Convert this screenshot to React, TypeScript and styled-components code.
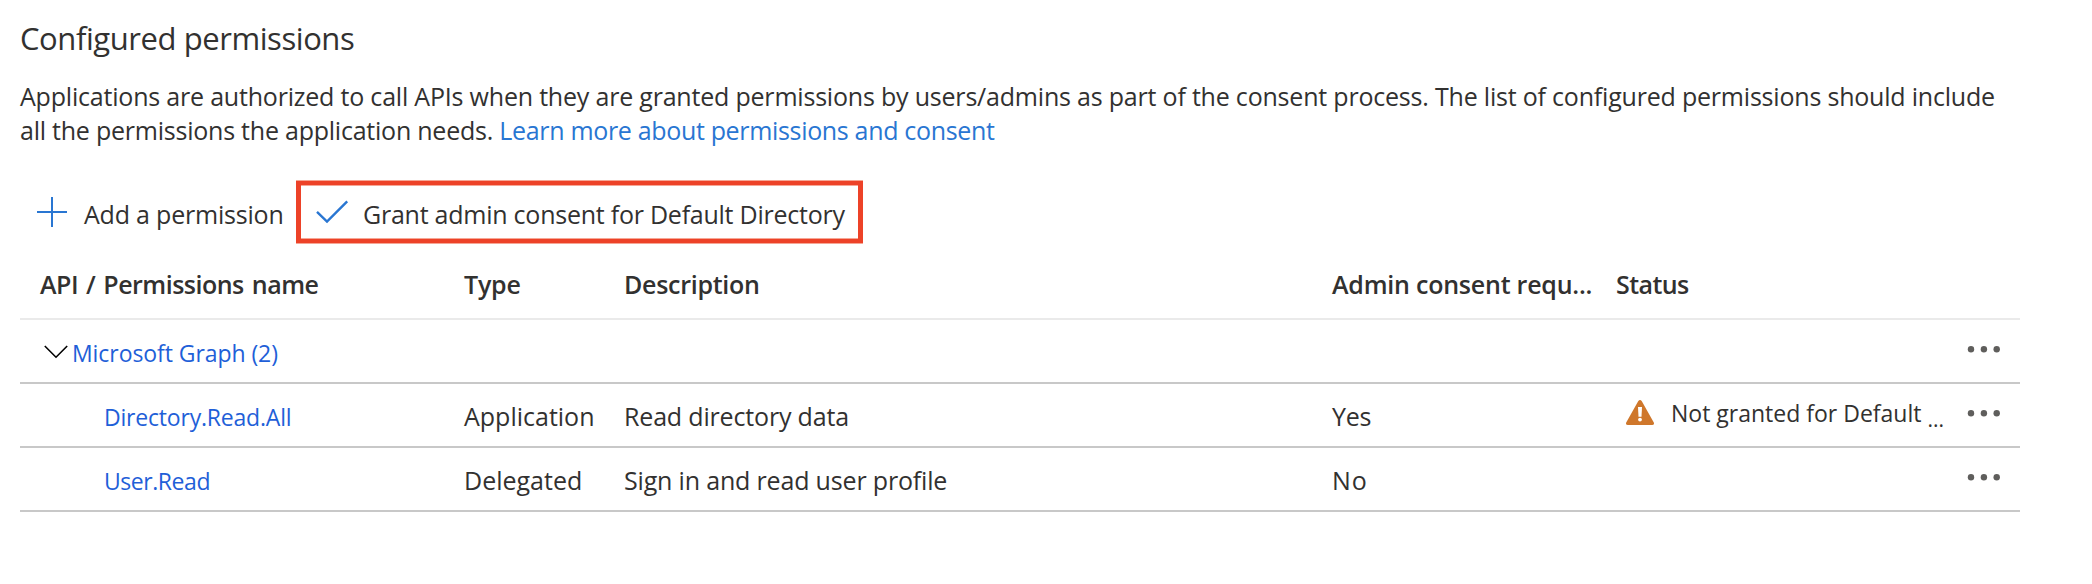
import React from "react";
import styled, { createGlobalStyle } from "styled-components";

const GlobalStyle = createGlobalStyle`
  * { box-sizing: border-box; }
  body {
    margin: 0;
    background: #fff;
    color: #323130;
    font-family: "Open Sans", "Noto Sans", sans-serif;
    font-size: 25px;
    line-height: 34px;
  }
  svg { display: block; flex: none; }
`;

const Page = styled.main`
  width: 2092px;
  height: 584px;
  padding: 18px 72px 0 20px;
  overflow: hidden;
`;

const Label = styled.span<{ $track?: number; $wordGap?: number }>`
  letter-spacing: ${(p) => p.$track ?? 0}px;
  word-spacing: ${(p) => p.$wordGap ?? 0}px;
  white-space: nowrap;
`;

const Title = styled.h1`
  margin: 0;
  font-size: 31px;
  font-weight: 400;
  line-height: 40px;
  letter-spacing: -0.43px;
`;

const Intro = styled.p`
  margin: 21px 0 0;
  white-space: nowrap;
`;

const InfoLink = styled.a`
  color: #2976d2;
  letter-spacing: -0.33px;
  text-decoration: none;
`;

const Toolbar = styled.div`
  display: flex;
  height: 64px;
  margin-top: 33px;
`;

const Command = styled.button`
  display: flex;
  align-items: flex-start;
  width: 276px;
  height: 64px;
  padding: 17px 0 0 17px;
  gap: 17px;
  border: 0;
  background: none;
  color: inherit;
  font: inherit;
  text-align: left;
`;

const HighlightedCommand = styled(Command)`
  width: 567px;
  height: 62px;
  margin-top: 1px;
  padding: 12px 0 0 14px;
  gap: 14px;
  border: solid #ed4228;
  border-width: 4px 5px;
  box-shadow:
    0 -1px #f6a695, 0 1px #f6a695,
    inset 0 1px #f6a695, inset 0 -1px #f6a695;
`;

const Table = styled.div`
  width: 2000px;
`;

const Row = styled.div<{ $header?: boolean }>`
  display: grid;
  grid-template-columns: 424px 160px 708px 284px 344px 60px;
  height: ${(p) => (p.$header ? 76 : 64)}px;
  padding: ${(p) => (p.$header ? 23 : 15)}px 0 0 20px;
  border-bottom: 2px solid ${(p) => (p.$header ? "#eaeaea" : "#c8c8c8")};
  font-weight: ${(p) => (p.$header ? 600 : 400)};
`;

const NameCell = styled.div<{ $indent: number }>`
  display: flex;
  padding: 1px 0 0 ${(p) => p.$indent}px;
  font-size: 23px;
`;

const NameLink = styled.a<{ $track?: number }>`
  color: #1f5fd8;
  letter-spacing: ${(p) => p.$track ?? 0}px;
  text-decoration: none;
  white-space: nowrap;
`;

const Chevron = styled.svg`
  margin: 8px 3px 0 0;
`;

const StatusCell = styled.div`
  display: flex;
  align-items: flex-start;
  margin-top: -3px;
  padding-left: 9px;
  font-size: 23px;
`;

const WarningIcon = styled.svg`
  margin: 3px 16px 0 0;
`;

const Ellipsis = styled.span`
  margin: 6px 0 0 6px;
  font-size: 21px;
`;

const MenuCell = styled.div`
  padding: 10px 0 0 6px;
`;

const PlusIcon = () => (
  <svg width="30" height="30" viewBox="0 0 30 30" stroke="#2976d2" strokeWidth="2">
    <path d="M15 0v30M0 15h30" />
  </svg>
);

const CheckMark = styled.svg`
  margin-top: 3px;
`;

const CheckIcon = () => (
  <CheckMark width="34" height="30" viewBox="0 0 34 30" fill="none" stroke="#2976d2" strokeWidth="2.4">
    <path d="M2 11.9 12 21.6 32.2 1.4" />
  </CheckMark>
);

const MoreIcon = () => (
  <svg width="34" height="9" viewBox="0 0 34 9" fill="#5f5e5c">
    <circle cx="5" cy="4.3" r="3.2" />
    <circle cx="17.9" cy="4.3" r="3.2" />
    <circle cx="30.7" cy="4.3" r="3.2" />
  </svg>
);

const More = () => (
  <MenuCell>
    <MoreIcon />
  </MenuCell>
);

interface Permission {
  name: string;
  nameTrack: number;
  type: string;
  typeTrack: number;
  description: string;
  consent: string;
  consentTrack: number;
  pending?: boolean;
}

const permissions: Permission[] = [
  {
    name: "Directory.Read.All", nameTrack: -0.2,
    type: "Application", typeTrack: 0,
    description: "Read directory data",
    consent: "Yes", consentTrack: -0.3,
    pending: true,
  },
  {
    name: "User.Read", nameTrack: -0.45,
    type: "Delegated", typeTrack: 0,
    description: "Sign in and read user profile",
    consent: "No", consentTrack: 0.9,
  },
];

export default function App() {
  return (
    <Page>
      <GlobalStyle />
      <Title>Configured permissions</Title>
      <Intro>
        <Label $track={-0.2}>
          Applications are authorized to call APIs when they are granted permissions by users/admins as part of the
          consent process. The list of configured permissions should include
        </Label>
        <br />
        <Label $track={-0.23}>all the permissions the application needs. </Label>
        <InfoLink>Learn more about permissions and consent</InfoLink>
      </Intro>
      <Toolbar>
        <Command>
          <PlusIcon />
          <Label $track={-0.2}>Add a permission</Label>
        </Command>
        <HighlightedCommand>
          <CheckIcon />
          <Label $track={-0.24}>Grant admin consent for Default Directory</Label>
        </HighlightedCommand>
      </Toolbar>
      <Table>
        <Row $header>
          <Label $track={-0.5} $wordGap={2}>API / Permissions name</Label>
          <Label $track={-0.19}>Type</Label>
          <Label $track={-0.28}>Description</Label>
          <Label $track={-0.22}>Admin consent requ...</Label>
          <Label $track={-0.58}>Status</Label>
        </Row>
        <Row>
          <NameCell $indent={3}>
            <Chevron width="26" height="16" viewBox="0 0 26 16" fill="none" stroke="#000" strokeWidth="1.6">
              <path d="M1.8 2 13 13.2 24.2 2" />
            </Chevron>
            <NameLink $track={-0.07}>Microsoft Graph (2)</NameLink>
          </NameCell>
          <span />
          <span />
          <span />
          <span />
          <More />
        </Row>
        {permissions.map((p) => (
          <Row key={p.name}>
            <NameCell $indent={64}>
              <NameLink $track={p.nameTrack}>{p.name}</NameLink>
            </NameCell>
            <Label $track={p.typeTrack}>{p.type}</Label>
            <Label $track={-0.17}>{p.description}</Label>
            <Label $track={p.consentTrack}>{p.consent}</Label>
            <StatusCell>
              {p.pending && (
                <>
                  <WarningIcon width="30" height="27" viewBox="0 0 30 27">
                    <path
                      d="M13.3 2Q15 -.2 16.7 2L28.8 23.4Q29.5 26 27.2 26H2.8Q.5 26 1.2 23.4Z"
                      fill="#cf772b"
                    />
                    <path d="M13 8h4l-.5 9.8h-3z" fill="#fff" />
                    <circle cx="15" cy="20.6" r="1.9" fill="#fff" />
                  </WarningIcon>
                  <Label>Not granted for Default</Label>
                  <Ellipsis>...</Ellipsis>
                </>
              )}
            </StatusCell>
            <More />
          </Row>
        ))}
      </Table>
    </Page>
  );
}
